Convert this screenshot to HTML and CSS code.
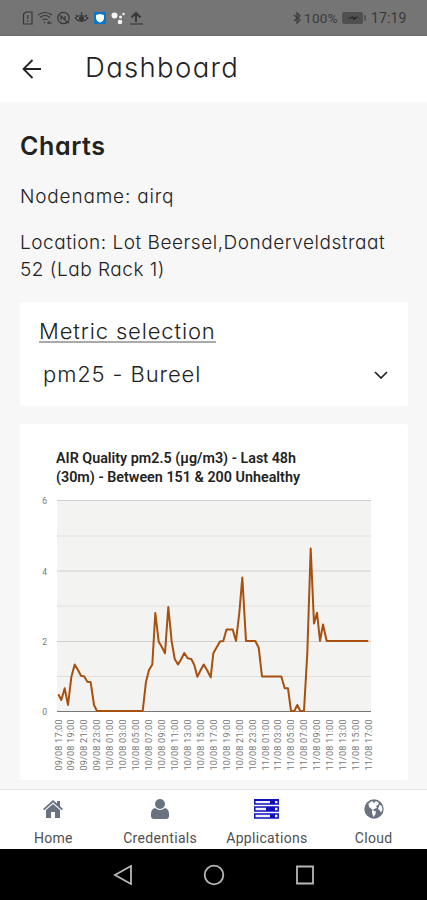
FILE: index.html
```html
<!DOCTYPE html>
<html lang="en">
<head>
<meta charset="utf-8">
<title>Dashboard</title>
<link rel="stylesheet" href="styles.css">
</head>
<body>
<div class="status">
  <svg class="status-icons" width="124" height="16" viewBox="0 0 124 16" fill="none" stroke="#383838" stroke-width="1.2">
    <path d="M2.500 4L5 2h6v12H2.500zM6.800 5v4M6.800 10.500v1.500"/>
    <path d="M17 5q7-5 14 0M19 7.500q5-4 10 0M21.500 10q2.500-2 5 0M23 12l1 1M26 13h5M28 11v3"/>
    <circle cx="42.500" cy="8" r="5.700"/><path d="M40 10V6l4 4V6M45 11l3 2"/>
    <path d="M54 8q6.500-5 13 0q-6.500 7-13 0M55 5l2 1.500M60.500 2v3M66 5l-2 1.500"/><circle cx="60.500" cy="8.500" r="2" fill="#383838"/>
    <rect x="73" y="2" width="12" height="12" rx="1" fill="#0876cb" stroke="none"/><path d="M79 4l4 1v3q0 3-4 4.500q-4-1.500-4-4.500V5z" fill="#fff" stroke="none"/>
    <g fill="#f5f5f5" stroke="none"><circle cx="93.500" cy="5.500" r="3"/><circle cx="99.500" cy="7" r="1.500"/><circle cx="99" cy="12" r="2.300"/><circle cx="102.500" cy="4" r="1.200"/></g>
    <path d="M115 12V4M110.500 7.500L115 3l4.500 4.500" stroke-width="2"/><path d="M109 14h13"/>
  </svg>
  <div class="status-right">
    <svg width="9" height="14" viewBox="0 0 9 14" fill="none" stroke="#3a3a3a" stroke-width="1.200"><path d="M1 4l6 5-3 3V2l3 3-6 5"/></svg>
    <span class="battery-text">100%</span>
    <svg class="battery" width="25" height="12" viewBox="0 0 25 12"><rect width="21" height="12" rx="2" fill="#505050"/><rect x="22" y="3" width="2" height="6" fill="#555"/><path d="M5 7l6-3v1.500l6-1-6 4V6z" fill="#282828"/></svg>
    <span class="clock">17:19</span>
  </div>
</div>
<header class="header">
  <svg width="20" height="20" viewBox="0 0 20 20" fill="none" stroke="#222" stroke-width="1.800"><path d="M10.500 1L1.500 10l9 9M1.500 10H19"/></svg>
  <span class="header-title">Dashboard</span>
</header>
<main class="content">
  <h1 class="title">Charts</h1>
  <p class="info node">Nodename: airq</p>
  <p class="info location"><span>Location: Lot Beersel,Donderveldstraat</span><br><span>52 (Lab Rack 1)</span></p>
  <section class="card metric">
    <div class="metric-label">Metric selection</div>
    <div class="select"><span class="select-value">pm25 - Bureel</span>
      <svg width="14" height="8" viewBox="0 0 14 8" fill="none" stroke="#222" stroke-width="1.700"><path d="M1 1l6 6 6-6"/></svg>
    </div>
  </section>
  <section class="card">
    <svg class="chart" id="chart" width="388" height="356" viewBox="20 424 388 356">
      <g class="chart-title">
        <text x="56" y="462.5" textLength="240" lengthAdjust="spacingAndGlyphs">AIR Quality pm2.5 (µg/m3) - Last 48h</text>
        <text x="56" y="481.5" textLength="244" lengthAdjust="spacingAndGlyphs">(30m) - Between 151 &amp; 200 Unhealthy</text>
      </g>
      <rect x="57" y="501" width="314" height="211" fill="#f3f3f1"/>
      <g class="grid">
        <path d="M57 500.500h314M57 571h314M57 641.500h314" stroke="#cfcfcd"/>
        <path d="M57 536h314M57 606h314M57 676.500h314" stroke="#dfdfdd"/>
        <path d="M57 711.500h314" stroke="#777"/>
      </g>
      <g class="y-labels"><text x="47" y="504">6</text><text x="47" y="574.500">4</text><text x="47" y="645">2</text><text x="47" y="715">0</text></g>
      <polyline class="series" points="58.3,694.3 61.3,700 64.700,688.3 68,705 71.300,677.3 74.700,664.500 78,670 81,675.700 84.300,676.500 87.300,681.700 90.700,682.3 94,705 97,711 142.700,711 146,681.700 149,670 152.300,664.500 155.300,613 158.700,641.700 162,647.300 165,653.300 168.300,607 171.700,641.700 174.700,659 178,664.500 181.300,659 184.300,653 187.700,658.3 191.300,659 194.300,665 197.300,676.700 200.700,670 203.700,664.500 207,670 210.700,677.300 213.300,653.300 216.700,647.300 220,641.500 223.300,641 226.500,629.5 232.700,629.5 236,641 239.300,613 242.300,577.500 246,641 255.300,641 258.700,647.700 262,676.500 281.300,676.500 284.700,688.3 288,688.3 291,711 294.300,711 297.300,705 300.300,711 304,711 307.300,653 310.700,548.500 314,623.500 317,612.700 320,641 323,624.500 326.700,641 368.300,641"/>
      <g id="time-labels" class="time-labels"></g>
    </svg>
  </section>
</main>
<nav class="tabs">
  <div class="tab"><svg width="22" height="20" viewBox="0 0 22 20" fill="#697281"><path d="M1 10L11 1l4 3.500V2h3v5l3 3-1.200 1.300L11 3.500 2.200 11.300z"/><path d="M4 11l7-6 7 6v8h-5v-6H9v6H4z"/></svg><span class="tab-label">Home</span></div>
  <div class="tab"><svg width="20" height="20" viewBox="0 0 20 20" fill="#697281"><circle cx="10" cy="5" r="5"/><path d="M5 9q5 4 10 0q4 1 4 6v2q0 3-3 3H4q-3 0-3-3v-2q0-5 4-6z"/></svg><span class="tab-label">Credentials</span></div>
  <div class="tab"><svg width="25" height="20" viewBox="0 0 25 20"><g fill="#f1f1ff" stroke="#1010bd" stroke-width="1.500"><path d="M.8 1h23.400v4H.8zM.8 8h23.400v4H.8zM.8 15h23.400v4H.8z"/></g><path d="M0 0h25v2H0zM16 1h5v4h-5zM12 8h9v4h-9zM16 15h5v4h-5z" fill="#1010bd"/><path d="M21 2.500h2v1.500h-2zM21 9.300h2v1.500h-2zM21 16.300h2v1.500h-2z" fill="#fff"/></svg><span class="tab-label">Applications</span></div>
  <div class="tab"><svg width="20" height="20" viewBox="0 0 20 20"><circle cx="10" cy="10" r="9.700" fill="#697281"/><path d="M4.500 4.500L8 2l2 2 2-2 3 2-1 2-2 1 1 2-2 .5L9 11 5 8z" fill="#fff"/><path d="M8 11l4 1.500-.5 2.500-2 3-1.500-4zM15.500 6l2 .5 1 4-1.500 3-1.500-2.500-1.500-1z" fill="#fff"/></svg><span class="tab-label">Cloud</span></div>
</nav>
<div class="android">
  <svg width="20" height="22" viewBox="0 0 20 22"><path d="M18 2v18L2 11z"/></svg>
  <svg width="22" height="22" viewBox="0 0 22 22"><circle cx="11" cy="11" r="9.300"/></svg>
  <svg width="20" height="22" viewBox="0 0 20 22"><path d="M2 2.500h16v17H2z"/></svg>
</div>
<script src="chart.js"></script>
</body>
</html>
```
FILE: styles.css
```css
* { box-sizing: border-box; }
body { margin: 0; width: 427px; height: 900px; overflow: hidden; display: flex; flex-direction: column; background: #f7f7f7; color: #222; font-family: Inter, sans-serif; font-feature-settings: "cv11"; }
svg { display: block; flex: none; }
.status { height: 36px; flex: none; background: #757575; border-bottom: 1px solid #686868; display: flex; align-items: center; justify-content: space-between; padding: 1px 21px 0 21px; color: #3a3a3a; font-family: Roboto, sans-serif; font-size: 14px; }
.status-right { display: flex; align-items: center; }
.battery-text { width: 34px; margin-left: 2px; font-size: 13.500px; letter-spacing: .3px; }
.battery { margin: 0 4px 0 4px; }
.clock { width: 35px; letter-spacing: .1px; }
.header { height: 66px; flex: none; background: #fff; display: flex; align-items: center; padding: 0 22px; }
.header-title { font-size: 27.500px; font-weight: 300; margin: -4px 0 0 43px; letter-spacing: 1.350px; line-height: 36px; }
.content { height: 687px; flex: none; padding: 28px 19px 0 20px; }
.title { margin: 0; font-size: 25px; line-height: 32px; font-weight: 600; letter-spacing: .6px; }
.info { margin: 0; font-size: 19px; line-height: 27px; font-weight: 300; white-space: nowrap; letter-spacing: .520px; }
.node { margin-top: 21px; letter-spacing: .820px; }
.location { margin-top: 19px; }
.card { background: #fff; border-radius: 3px; overflow: hidden; }
.metric { height: 104px; margin: 19px 0 18px; padding: 15px 19px 0; }
.metric-label { width: fit-content; font-size: 22px; line-height: 28px; font-weight: 350; height: 26px; letter-spacing: .860px; border-bottom: 2px solid #aaa; }
.select { display: flex; align-items: center; justify-content: space-between; padding-left: 4px; height: 32px; margin-top: 16px; padding-right: 1px; }
.select-value { font-size: 22px; font-weight: 300; letter-spacing: .880px; margin-top: -3px; }
.chart { font-family: Roboto, sans-serif; }
.chart-title { font-size: 14px; font-weight: 600; fill: #222; }
.grid { stroke-width: 1; }
.y-labels { font-size: 8.500px; text-anchor: end; fill: #777; }
.time-labels { font-size: 9px; fill: #777; }
.series { fill: none; stroke: #a8500f; stroke-width: 2; stroke-linejoin: round; }
.tabs { height: 60px; flex: none; background: #fff; border-top: 1px solid #e7e7e7; display: grid; grid-template-columns: repeat(4, 1fr); font-family: Roboto, sans-serif; }
.tab { display: flex; flex-direction: column; align-items: center; padding-top: 9px; }
.tab-label { font-size: 14px; line-height: 18px; margin-top: 10px; color: #505050; letter-spacing: .320px; }
.android { height: 51px; flex: none; background: #000; display: flex; justify-content: center; align-items: center; gap: 70px; fill: none; stroke: #b8b8b8; stroke-width: 1.800; }
```
FILE: chart.js
```js
const labels = document.getElementById('time-labels');
for (let i = 0; i < 25; i++) {
  const hour = 17 + i * 2;
  const day = 9 + Math.floor(hour / 24);
  const label = document.createElementNS('http://www.w3.org/2000/svg', 'text');
  label.setAttribute('transform', `translate(${61.5 + i * 12.94} 770.5) rotate(-90)`);
  label.setAttribute('textLength', '51');
  label.textContent = `${String(day).padStart(2, '0')}/08 ${String(hour % 24).padStart(2, '0')}:00`;
  labels.appendChild(label);
}
```
